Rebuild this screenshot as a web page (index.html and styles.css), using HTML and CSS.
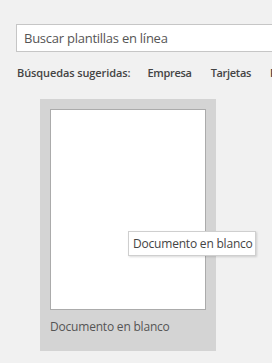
FILE: index.html
```html
<!DOCTYPE html>
<html lang="es">
<head>
<meta charset="utf-8">
<link rel="stylesheet" href="styles.css">
</head>
<body>
<div class="page">
  <div class="search"><span class="placeholder">Buscar plantillas en línea</span></div>
  <div class="suggest">
    <span class="suggest-label">Búsquedas sugeridas:</span>
    <span class="suggest-item">Empresa</span>
    <span class="suggest-item">Tarjetas</span>
    <span class="suggest-item">Personal</span>
  </div>
  <div class="gallery">
    <div class="card">
      <div class="thumb"></div>
      <div class="card-name">Documento en blanco</div>
      <div class="tooltip">Documento en blanco</div>
    </div>
  </div>
</div>
</body>
</html>
```
FILE: styles.css
```css
html, body {
  margin: 0;
  padding: 0;
  background: #f1f1f1;
  overflow: hidden;
}
.page {
  width: 272px;
  height: 363px;
  overflow: hidden;
  font-family: "Open Sans", "Noto Sans", sans-serif;
  color: #444;
}
.search {
  margin: 24px 0 0 16px;
  width: 300px;
  height: 28px;
  box-sizing: border-box;
  border: 1px solid #c6c6c6;
  background: #fff;
  display: flex;
  align-items: center;
  padding-left: 7px;
}
.placeholder {
  font-size: 13px;
  letter-spacing: -0.25px;
  color: #555;
  white-space: nowrap;
}
.suggest {
  margin: 12px 0 0 17px;
  display: flex;
  gap: 17px;
  white-space: nowrap;
  height: 16px;
  align-items: center;
  font-size: 11px;
  font-weight: 600;
  letter-spacing: -0.1px;
  color: #444;
}
.suggest-item {
  letter-spacing: -0.3px;
  flex-shrink: 0;
}
.suggest-item + .suggest-item {
  margin-left: 2px;
}
.gallery {
  margin: 19px 0 0 40px;
}
.card {
  position: relative;
  width: 176px;
  height: 252px;
  box-sizing: border-box;
  background: #d4d4d4;
  padding: 10px 10px 0 10px;
}
.thumb {
  height: 201px;
  box-sizing: border-box;
  background: #fff;
  border: 1px solid #ababab;
}
.card-name {
  margin-top: 9px;
  padding-left: 0;
  font-size: 12px;
  letter-spacing: -0.2px;
  line-height: 16px;
  color: #555;
}
.tooltip {
  position: absolute;
  left: 88px;
  top: 132px;
  width: 128px;
  height: 25px;
  box-sizing: border-box;
  background: #fff;
  border: 1px solid #cfcfcf;
  box-shadow: 1px 1px 2px rgba(0,0,0,0.15);
  font-size: 12px;
  letter-spacing: -0.2px;
  color: #444;
  display: flex;
  align-items: center;
  padding-left: 4px;
  white-space: nowrap;
}
```
